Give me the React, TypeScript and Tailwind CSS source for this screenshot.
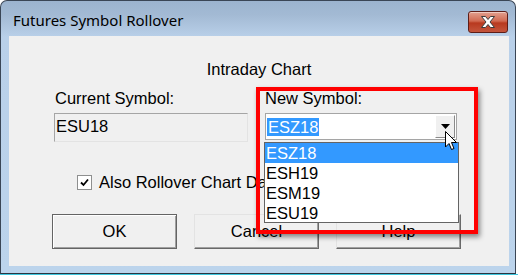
import React from "react";

const items = ["ESZ18", "ESH19", "ESM19", "ESU19"];

export default function App() {
  return (
    <div className="relative w-[518px] h-[275px] bg-white overflow-hidden" style={{ fontFamily: '"Liberation Sans", Arial, sans-serif' }}>
      <div className="flex flex-col w-[516px] h-[274px] rounded-t-[7px] border border-[#3a4656] border-b-[#2a3440] bg-[linear-gradient(to_bottom,#9cb4cf_0px,#a3bad4_14px,#b9d0e9_36px,#bcd4ec_100%)]">
        {/* title bar */}
        <div className="flex items-start h-[35px] pl-[12px] pr-[7px]">
          <div className="mt-[9px] text-[15px] leading-[20px] text-black" style={{ fontFamily: '"Noto Sans", "Open Sans", sans-serif' }}>
            Futures Symbol Rollover
          </div>
          <div className="ml-auto mt-[10px] w-[40px] h-[22px] rounded-[3px] border border-[#5e1d17] bg-[linear-gradient(to_bottom,#e2a08f_0%,#d16a52_45%,#b8391f_55%,#c4553c_100%)] flex items-center justify-center shadow-[inset_0_1px_0_rgba(255,255,255,0.45)]">
            <svg width="18" height="14" viewBox="0 0 18 14">
              <path d="M2.5 1.5 H6.5 L9 4.5 L11.5 1.5 H15.5 L11 7 L15.5 12.5 H11.5 L9 9.5 L6.5 12.5 H2.5 L7 7 Z" fill="#ffffff" stroke="#3c3c3c" strokeWidth="1" strokeLinejoin="round" />
            </svg>
          </div>
        </div>
        {/* client area */}
        <div className="relative ml-[8px] w-[500px] h-[230px] bg-[#f0f0f0] text-[16.5px] leading-[19px] text-black">
          <div className="pt-[24px] text-center">Intraday Chart</div>
          <div className="flex mt-[10px]">
            <div className="ml-[45px] w-[194px] flex flex-col">
              <div className="pl-[1px]">Current Symbol:</div>
              <div className="mt-[5px] h-[29px] border border-[#a5a5a5] border-r-[#e3e3e3] border-b-[#e3e3e3] pl-[1px] pt-[3px]">ESU18</div>
            </div>
            <div className="ml-[17px] w-[192px] flex flex-col">
              <div>New Symbol:</div>
              <div className="mt-[5px] h-[27px] border border-[#a5a5a5] bg-white flex items-center pl-[1px] pr-[1px]">
                <span className="bg-[#3399ff] text-white px-[1px] leading-[18px]">ESZ18</span>
                <div className="ml-auto w-[20px] h-[23px] border border-[#ffffff] border-r-[#8a8a8a] border-b-[#8a8a8a] bg-[#f0f0f0] flex items-center justify-center">
                  <svg width="9" height="5" viewBox="0 0 9 5"><path d="M0 0 H9 L4.5 5 Z" fill="#000" /></svg>
                </div>
              </div>
            </div>
          </div>
          <div className="flex items-center mt-[31px] ml-[68px]">
            <div className="w-[15px] h-[15px] border border-[#8e8f8f] bg-white flex items-center justify-center">
              <svg width="9" height="9" viewBox="0 0 9 9"><path d="M1 4.5 L3.5 7 L8 1.5" fill="none" stroke="#000" strokeWidth="1.8" /></svg>
            </div>
            <div className="ml-[7px] whitespace-nowrap">Also Rollover Chart Data</div>
          </div>
          <div className="flex gap-[17px] mt-[22px] ml-[43px]">
            <div className="w-[125px] h-[35px] border border-[#646464] shadow-[inset_1px_1px_0_#ffffff,inset_-1px_-1px_0_#a0a0a0] flex items-center justify-center">OK</div>
            <div className="w-[125px] h-[35px] border border-[#e3e3e3] border-r-[#696969] border-b-[#696969] shadow-[inset_-1px_-1px_0_#a0a0a0] flex items-center justify-center">Cancel</div>
            <div className="w-[125px] h-[35px] border border-[#e3e3e3] border-r-[#696969] border-b-[#696969] shadow-[inset_-1px_-1px_0_#a0a0a0] flex items-center justify-center">Help</div>
          </div>

          {/* dropdown list */}
          <div className="absolute left-[255px] top-[106px] w-[195px] h-[81px] border border-[#646464] bg-white flex flex-col">
            {items.map((it, i) => (
              <div key={it} className={"h-[20px] pl-[1px] leading-[20px] " + (i === 0 ? "bg-[#3399ff] text-white" : "")}>{it}</div>
            ))}
          </div>

          {/* red highlight rectangle */}
          <div className="absolute left-[247px] top-[51px] w-[222px] h-[147px] border-[4px] border-[#ff0000] shadow-[2px_3px_5px_rgba(0,0,0,0.45)] pointer-events-none" />

          {/* mouse cursor */}
          <svg className="absolute left-[436px] top-[95px]" width="13" height="20" viewBox="0 0 13 20">
            <path d="M0.5 0.5 V16 L4 12.5 L6.5 18.5 L9 17.5 L6.5 11.5 H11.5 Z" fill="#fff" stroke="#000" strokeWidth="1" strokeLinejoin="round" />
          </svg>
        </div>
      </div>
      <div className="absolute left-0 bottom-0 w-[518px] h-[1px] bg-[#3ec6de]" />
    </div>
  );
}
